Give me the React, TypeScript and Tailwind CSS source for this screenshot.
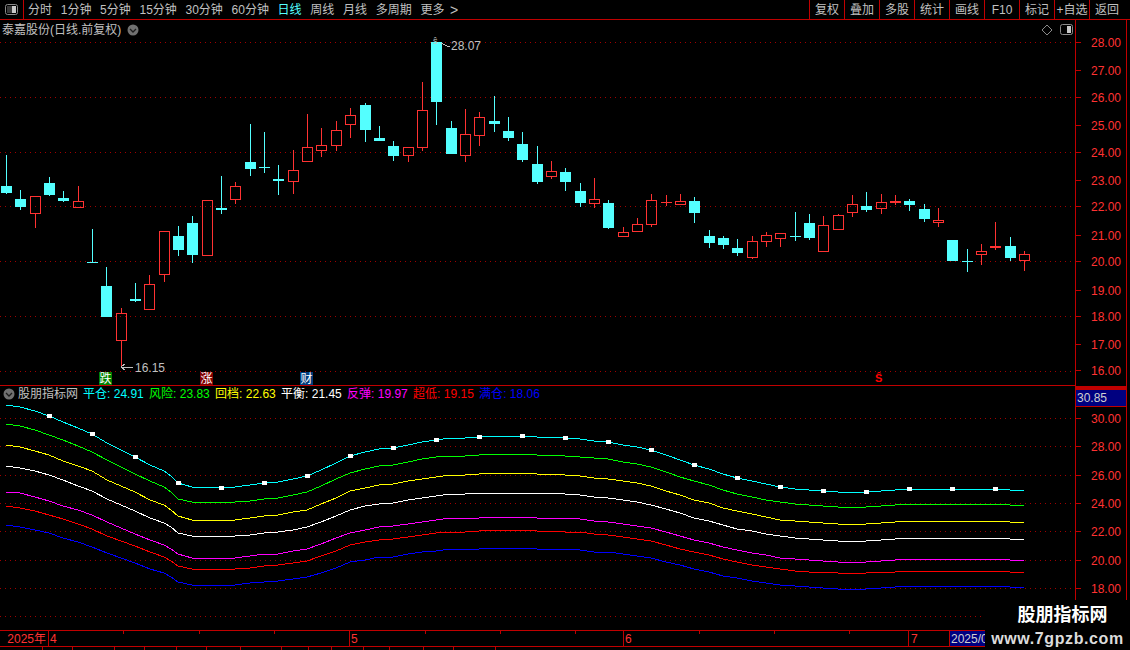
const RED = "#ff3232";
const CYAN = "#54ffff";
const GRID = "#a00000";

const tabs = ["分时", "1分钟", "5分钟", "15分钟", "30分钟", "60分钟", "日线", "周线", "月线", "多周期", "更多"];
const tools = ["复权", "叠加", "多股", "统计", "画线", "F10", "标记", "+自选", "返回"];

// colour, wick top, body top, body bottom, wick bottom (page pixels)
const candles: [string, number, number, number, number][] = [
  ["c", 155, 186, 193, 194], ["c", 190, 199, 207, 210], ["r", 196, 196, 214, 228], ["c", 177, 183, 195, 196],
  ["c", 191, 198, 201, 202], ["r", 186, 201, 208, 208], ["c", 229, 262, 263, 263], ["c", 267, 286, 317, 317],
  ["r", 308, 313, 341, 367], ["c", 283, 299, 301, 302], ["r", 275, 284, 310, 310], ["r", 231, 231, 275, 282],
  ["c", 226, 236, 250, 256], ["c", 216, 223, 255, 263], ["r", 200, 200, 256, 256], ["c", 176, 208, 210, 214],
  ["r", 182, 186, 200, 204], ["c", 124, 162, 169, 176], ["c", 132, 167, 168, 173], ["c", 165, 179, 181, 195],
  ["r", 150, 170, 182, 194], ["r", 114, 147, 162, 162], ["r", 128, 145, 151, 157], ["r", 121, 130, 146, 151],
  ["r", 108, 115, 125, 138], ["c", 103, 105, 130, 142], ["c", 126, 138, 141, 141], ["c", 141, 146, 156, 161],
  ["r", 147, 147, 156, 162], ["r", 82, 110, 148, 151], ["c", 42, 42, 102, 125], ["c", 121, 128, 154, 154],
  ["r", 109, 134, 156, 162], ["r", 112, 117, 136, 146], ["c", 96, 121, 124, 132], ["c", 117, 131, 138, 141],
  ["c", 132, 144, 160, 162], ["c", 146, 164, 182, 184], ["r", 161, 171, 177, 179], ["c", 168, 172, 182, 191],
  ["c", 183, 191, 203, 207], ["r", 178, 199, 204, 208], ["c", 200, 203, 228, 229], ["r", 227, 232, 237, 237],
  ["r", 218, 224, 232, 232], ["r", 194, 200, 225, 227], ["r", 195, 202, 203, 206], ["r", 194, 201, 205, 205],
  ["c", 197, 201, 213, 223], ["c", 230, 236, 243, 248], ["c", 236, 238, 245, 249], ["c", 239, 248, 253, 256],
  ["r", 236, 241, 258, 259], ["r", 232, 235, 242, 247], ["r", 233, 233, 239, 247], ["c", 212, 236, 237, 241],
  ["c", 214, 223, 238, 240], ["r", 216, 225, 252, 252], ["r", 214, 215, 230, 230], ["r", 195, 204, 213, 217],
  ["c", 192, 206, 210, 212], ["r", 194, 202, 209, 214], ["r", 195, 201, 203, 205], ["c", 199, 201, 205, 211],
  ["c", 204, 209, 219, 222], ["r", 208, 220, 223, 227], ["c", 240, 240, 261, 261], ["c", 249, 261, 262, 272],
  ["r", 244, 251, 255, 265], ["r", 222, 246, 248, 250], ["c", 237, 246, 258, 261], ["r", 251, 254, 261, 271],
];

const upperGrid = [42, 97, 152, 206, 261, 316, 371];
const upperTicks: [number, string][] = [
  [42, "28.00"], [70, "27.00"], [97, "26.00"], [125, "25.00"], [152, "24.00"], [180, "23.00"], [206, "22.00"],
  [235, "21.00"], [261, "20.00"], [290, "19.00"], [316, "18.00"], [344, "17.00"], [370, "16.00"],
];
const lowerTicks: [number, string][] = [
  [418, "30.00"], [446, "28.00"], [475, "26.00"], [503, "24.00"], [531, "22.00"], [560, "20.00"], [588, "18.00"],
];

// top band of the indicator, the other lines are fixed ratios of it
const band: [number, number][] = [
  [6, 405], [20, 407], [35, 411], [49, 416], [63, 422], [78, 428], [92, 434], [107, 443], [121, 450], [135, 457],
  [150, 465], [164, 471], [171, 476], [178, 483], [192, 487], [207, 487], [221, 488], [235, 487], [250, 485],
  [264, 483], [278, 482], [293, 479], [307, 476], [321, 470], [336, 463], [350, 456], [365, 452], [379, 449],
  [393, 448], [408, 445], [422, 442], [436, 440], [451, 438], [465, 438], [479, 437], [494, 436], [508, 436],
  [522, 436], [537, 437], [551, 437], [565, 438], [580, 439], [594, 441], [608, 442], [623, 445], [637, 447],
  [651, 450], [666, 455], [680, 460], [694, 465], [709, 469], [723, 474], [737, 478], [752, 481], [766, 484],
  [780, 487], [795, 489], [809, 490], [823, 491], [838, 492], [852, 492], [866, 492], [881, 491], [895, 490],
  [909, 489], [952, 489], [995, 489], [1010, 490], [1024, 491],
];
const squares = band.filter(([x]) => [49, 92, 135, 178, 221, 264, 307, 350, 393, 436, 479, 522, 565, 608, 651, 694, 737, 780, 823, 866, 909, 952, 995].includes(x));

const lines: [string, number][] = [
  ["#00ffff", 1],
  ["#00ff00", 0.9566],
  ["#ffff00", 0.9085],
  ["#ffffff", 0.8611],
  ["#ff00ff", 0.8017],
  ["#ff0000", 0.7688],
  ["#0000ff", 0.725],
];

const legend: [string, string, string][] = [
  ["平仓", "24.91", "text-[#00ffff]"],
  ["风险", "23.83", "text-[#00ff00]"],
  ["回档", "22.63", "text-[#ffff00]"],
  ["平衡", "21.45", "text-white"],
  ["反弹", "19.97", "text-[#ff00ff]"],
  ["超低", "19.15", "text-[#ff0000]"],
  ["满仓", "18.06", "text-[#0000ff]"],
];

const stub = ["w-[43px]", "w-[30px]", "w-[42px]", "w-[30px]", "w-[32px]", "w-[30px]", "w-[34px]", "w-[41px]", "w-[27px]", "w-[23px]", "w-[32px]", "w-[26px]", "w-[34px]", "w-[30px]", "w-[42px]"];

function bandPoints(ratio: number) {
  return band
    .map(([x, y]) => {
      const value = (30 - (y - 418) / 14.17) * ratio;
      return `${x},${Math.round(418 + (30 - value) * 14.17)}`;
    })
    .join(" ");
}

function Grid({ ys }: { ys: number[] }) {
  return (
    <>
      {ys.map((y) => (
        <line key={y} x1={0} x2={1075} y1={y + 0.5} y2={y + 0.5} stroke={GRID} strokeDasharray="1 4" />
      ))}
    </>
  );
}

function Chevron() {
  return (
    <svg width="12" height="12" viewBox="0 0 12 12">
      <circle cx="6" cy="6" r="5.5" fill="#707070" />
      <polyline points="3,5 6,8 9,5" fill="none" stroke="#1c1c1c" strokeWidth="1.3" />
    </svg>
  );
}

function Toggle() {
  return (
    <svg width="13" height="11" viewBox="0 0 13 11">
      <rect x="0.5" y="0.5" width="12" height="10" rx="2" fill="none" stroke="#8a8a8a" />
      <rect x="7" y="2" width="4" height="7" fill="#c8c8c8" />
      <rect x="2" y="2" width="5" height="7" fill="#3a3a3a" />
    </svg>
  );
}

function Axis({ top, height, ticks }: { top: number; height: number; ticks: [number, string][] }) {
  return (
    <svg width="50" height={height} viewBox={`1076 ${top} 50 ${height}`} shapeRendering="crispEdges" className="block">
      {ticks.map(([y, label]) => (
        <g key={label}>
          <line x1={1076} x2={1081} y1={y + 0.5} y2={y + 0.5} stroke="#c00000" />
          <text x={1091} y={y + 5} fontSize="12" fill={RED} shapeRendering="auto">
            {label}
          </text>
        </g>
      ))}
    </svg>
  );
}

export default function App() {
  return (
    <div className="relative flex flex-col w-[1130px] h-[650px] overflow-hidden bg-black text-[12px] leading-none text-[#c0c0c0] font-['Liberation_Sans','Noto_Sans_CJK_SC',sans-serif]">
      {/* top toolbar */}
      <div className="flex h-[20px] shrink-0 items-center border-b border-[#c00000]">
        <div className="flex h-full w-[24px] items-center justify-center border-r border-[#c00000]">
          <Toggle />
        </div>
        <div className="ml-[4px] flex flex-1 items-center gap-[8.7px]">
          {tabs.map((t) => (
            <span key={t} className={t === "日线" ? "text-[#54ffff]" : ""}>
              {t}
            </span>
          ))}
          <span className="-ml-[3px] text-[14px]">&gt;</span>
        </div>
        <div className="flex h-full mr-[6px]">
          {tools.map((t) => (
            <span key={t} className="flex h-full w-[35px] items-center justify-center border-l border-[#c00000]">
              {t}
            </span>
          ))}
        </div>
      </div>

      {/* candle panel */}
      <div className="flex h-[366px] shrink-0">
        <div className="relative w-[1075px] border-b border-[#c00000]">
          <div className="absolute left-[2px] top-[4px] flex items-center gap-[6px]">
            <span>泰嘉股份(日线.前复权)</span>
            <Chevron />
          </div>
          <svg width="1075" height="365" viewBox="0 20 1075 365" shapeRendering="crispEdges" className="block">
            <Grid ys={upperGrid} />
            {candles.map(([kind, wt, bt, bb, wb], i) => {
              const cx = Math.round(6 + 14.34 * i) + 0.5;
              const color = kind === "c" ? CYAN : RED;
              const solid = kind === "c" || bb - bt <= 2;
              return (
                <g key={i}>
                  {wt < bt && <line x1={cx} x2={cx} y1={wt} y2={bt} stroke={color} />}
                  {wb > bb && <line x1={cx} x2={cx} y1={bb} y2={wb} stroke={color} />}
                  {solid ? (
                    <rect x={cx - 5.5} y={bt} width={11} height={Math.max(bb - bt, 1)} fill={color} />
                  ) : (
                    <rect x={cx - 5} y={bt + 0.5} width={10} height={bb - bt - 1} fill="none" stroke={color} />
                  )}
                </g>
              );
            })}
            {/* high and low marks */}
            <polyline points="441,43 447,46 450,46" fill="none" stroke="#c0c0c0" />
            <text x={451} y={50} fontSize="12" fill="#c0c0c0" shapeRendering="auto">28.07</text>
            <text x={433} y={44} fontSize="9" fill="#c0c0c0" shapeRendering="auto">ŝ</text>
            <polyline points="125,364 121,367 125,370 121,367 133,367" fill="none" stroke="#c0c0c0" />
            <text x={135} y={372} fontSize="12" fill="#c0c0c0" shapeRendering="auto">16.15</text>
          </svg>
          <span className="absolute left-[99px] top-[352px] flex h-[13px] w-[13px] items-center justify-center bg-[#008000] text-white">跌</span>
          <span className="absolute left-[200px] top-[352px] flex h-[13px] w-[13px] items-center justify-center bg-[#800000] text-white">涨</span>
          <span className="absolute left-[300px] top-[352px] flex h-[13px] w-[13px] items-center justify-center bg-[#003c7c] text-white">财</span>
          <span className="absolute left-[875px] top-[352px] text-[11px] leading-[12px] font-bold text-[#ff0000]">Ŝ</span>
          <svg width="32" height="12" viewBox="0 0 32 12" className="absolute left-[1041px] top-[4px]">
            <polygon points="6,1 11,6 6,11 1,6" fill="none" stroke="#8a8a8a" />
            <rect x="19.5" y="0.5" width="12" height="10" rx="2" fill="none" stroke="#8a8a8a" />
            <rect x="26" y="2" width="4" height="7" fill="#c8c8c8" />
          </svg>
        </div>
        <div className="w-[55px] border-l border-[#c00000]">
          <div className="h-full w-[51px] border-r border-[#c00000]">
            <Axis top={20} height={366} ticks={upperTicks} />
          </div>
        </div>
      </div>

      {/* indicator panel */}
      <div className="flex h-[244px] shrink-0">
        <div className="relative w-[1075px]">
          <div className="absolute left-[3px] top-[2px] flex items-center">
            <Chevron />
            <span className="ml-[3px] mr-[5px]">股朋指标网</span>
            <div className="flex gap-[5.3px]">
              {legend.map(([name, value, color]) => (
                <span key={name} className={color}>
                  {name}: {value}
                </span>
              ))}
            </div>
          </div>
          <svg width="1075" height="244" viewBox="0 386 1075 244" shapeRendering="crispEdges" className="block">
            <Grid ys={[...lowerTicks.map(([y]) => y), 616]} />
            {lines.map(([color, ratio]) => (
              <polyline key={color} points={bandPoints(ratio)} fill="none" stroke={color} strokeWidth="1" />
            ))}
            {squares.map(([x, y]) => (
              <rect key={x} x={x - 2} y={y - 2} width={5} height={4} fill="#ffffff" />
            ))}
          </svg>
        </div>
        <div className="w-[55px] border-l border-[#c00000]">
          <div className="flex h-full w-[51px] flex-col border-r border-[#c00000]">
            <div className="h-[4px] shrink-0 bg-[#c00000]" />
            <div className="flex h-[17px] shrink-0 items-center border-b border-[#c00000] bg-[#000080] pl-[1px] text-[#d0d0d0]">
              30.85
            </div>
            <Axis top={407} height={223} ticks={lowerTicks} />
          </div>
        </div>
      </div>

      {/* date axis */}
      <div className="flex h-[17px] shrink-0 items-center border-y border-[#c00000] text-[#ff3232]">
        <span className="flex h-full w-[49px] items-center justify-end pr-[2px] border-r border-[#c00000]">2025年</span>
        <div className="relative flex h-full w-[301px] items-center border-r border-[#c00000] pl-[1px]">
          4
          <i className="absolute left-[74px] top-0 h-[3px] w-px bg-[#c00000]" />
          <i className="absolute left-[150px] top-0 h-[3px] w-px bg-[#c00000]" />
          <i className="absolute left-[225px] top-0 h-[3px] w-px bg-[#c00000]" />
        </div>
        <div className="relative flex h-full w-[274px] items-center border-r border-[#c00000] pl-[1px]">
          5
          <i className="absolute left-[75px] top-0 h-[3px] w-px bg-[#c00000]" />
          <i className="absolute left-[150px] top-0 h-[3px] w-px bg-[#c00000]" />
          <i className="absolute left-[225px] top-0 h-[3px] w-px bg-[#c00000]" />
        </div>
        <div className="relative flex h-full w-[285px] items-center border-r border-[#c00000] pl-[1px]">
          6
          <i className="absolute left-[75px] top-0 h-[3px] w-px bg-[#c00000]" />
          <i className="absolute left-[150px] top-0 h-[3px] w-px bg-[#c00000]" />
          <i className="absolute left-[225px] top-0 h-[3px] w-px bg-[#c00000]" />
        </div>
        <div className="flex h-full w-[41px] items-center border-r border-[#c00000] pl-[2px]">7</div>
        <div className="flex h-full w-[36px] items-center overflow-hidden bg-[#000080] pl-[1px] text-[#d0d0d0] whitespace-nowrap">2025/0</div>
      </div>

      {/* status bar, cut off by the window */}
      <div className="flex h-[3px] shrink-0">
        {stub.map((w, i) => (
          <i key={i} className={`${w} h-full border-r border-[#c00000]`} />
        ))}
      </div>

      {/* site watermark */}
      <div className="absolute bottom-0 right-0 flex h-[50px] w-[145px] flex-col items-center bg-black pt-[5px] text-white">
        <span className="ml-[10px] text-[18px] leading-[20px] font-bold">股朋指标网</span>
        <span className="mt-[5px] text-[16px] leading-[17px] font-bold tracking-[0.6px] text-[#dcdcdc]">www.7gpzb.com</span>
      </div>
    </div>
  );
}
